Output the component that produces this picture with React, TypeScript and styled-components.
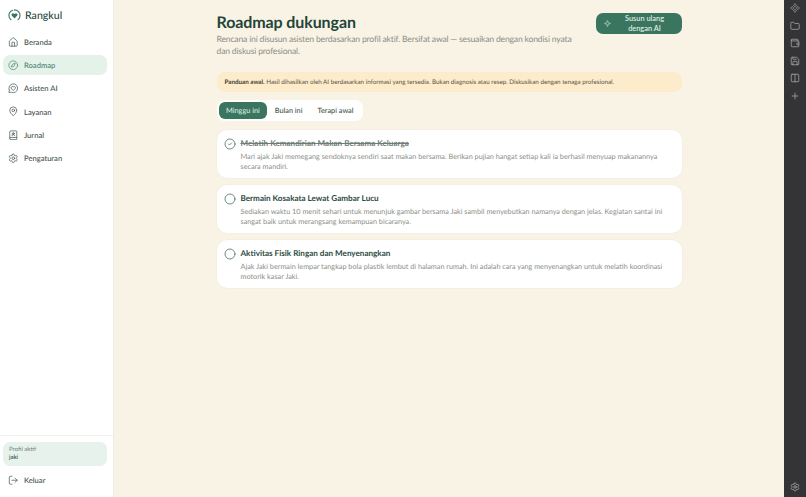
import React from 'react'
import styled, { createGlobalStyle } from 'styled-components'
import {
  Home,
  Compass,
  MessageCircleHeart,
  MapPin,
  BookUser,
  Settings,
  LogOut,
  Sparkle,
  CircleCheck,
  Circle,
  Plus,
  Folder,
  Wallet,
  Save,
  Columns2,
  Component,
} from 'lucide-react'

const GlobalStyle = createGlobalStyle`
  html, body { margin: 0; padding: 0; height: 100%; }
  body {
    font-family: Lato, Inter, "Liberation Sans", sans-serif;
    background: #f9f3e5;
    text-rendering: geometricPrecision;
  }
  * { box-sizing: border-box; }
`

const NAV = [
  { label: 'Beranda', icon: Home },
  { label: 'Roadmap', icon: Compass, active: true },
  { label: 'Asisten AI', icon: MessageCircleHeart },
  { label: 'Layanan', icon: MapPin },
  { label: 'Jurnal', icon: BookUser },
  { label: 'Pengaturan', icon: Settings },
]

const TASKS = [
  {
    title: 'Melatih Kemandirian Makan Bersama Keluarga',
    text: 'Mari ajak Jaki memegang sendoknya sendiri saat makan bersama. Berikan pujian hangat setiap kali ia berhasil menyuap makanannya secara mandiri.',
    done: true,
  },
  {
    title: 'Bermain Kosakata Lewat Gambar Lucu',
    text: 'Sediakan waktu 10 menit sehari untuk menunjuk gambar bersama Jaki sambil menyebutkan namanya dengan jelas. Kegiatan santai ini sangat baik untuk merangsang kemampuan bicaranya.',
  },
  {
    title: 'Aktivitas Fisik Ringan dan Menyenangkan',
    text: 'Ajak Jaki bermain lempar tangkap bola plastik lembut di halaman rumah. Ini adalah cara yang menyenangkan untuk melatih koordinasi motorik kasar Jaki.',
  },
]

const App = () => {
  return (
    <Page>
      <GlobalStyle />
      <Sidebar>
        <Brand>
          <svg width="13" height="13" viewBox="0 0 14 14" fill="none">
            <path d="M7 1a6 6 0 0 1 6 6 6 6 0 0 1-2.2 4.6M3.2 11.6A6 6 0 0 1 1 7a6 6 0 0 1 4-5.6" stroke="#3a7560" strokeWidth="1.2" strokeLinecap="round" />
            <path d="M7 10.2 4.2 7.4a1.7 1.7 0 0 1 2.4-2.4l.4.4.4-.4a1.7 1.7 0 0 1 2.4 2.4z" fill="#3a7560" />
          </svg>
          <BrandName>Rangkul</BrandName>
        </Brand>
        <Nav>
          {NAV.map(({ label, icon: Icon, active }) => (
            <NavItem key={label} $active={active}>
              <Icon size={10.5} strokeWidth={1.6} />
              {label}
            </NavItem>
          ))}
        </Nav>
        <SideBottom>
          <ProfileBox>
            <ProfileLabel>Profil aktif</ProfileLabel>
            <ProfileName>jaki</ProfileName>
          </ProfileBox>
          <NavItem>
            <LogOut size={10.5} strokeWidth={1.6} />
            Keluar
          </NavItem>
        </SideBottom>
      </Sidebar>

      <Main>
        <Content>
          <Head>
            <HeadText>
              <Title>Roadmap dukungan</Title>
              <Sub>
                Rencana ini disusun asisten berdasarkan profil aktif. Bersifat awal — sesuaikan dengan kondisi nyata dan diskusi profesional.
              </Sub>
            </HeadText>
            <RebuildButton>
              <Sparkle size={7} strokeWidth={1.8} />
              <span>Susun ulang dengan AI</span>
            </RebuildButton>
          </Head>

          <Notice>
            <b>Panduan awal.</b> Hasil dihasilkan oleh AI berdasarkan informasi yang tersedia. Bukan diagnosis atau resep. Diskusikan dengan tenaga profesional.
          </Notice>

          <Tabs>
            <Tab $active>Minggu ini</Tab>
            <Tab>Bulan ini</Tab>
            <Tab>Terapi awal</Tab>
          </Tabs>

          <TaskList>
            {TASKS.map((task) => (
              <TaskCard key={task.title}>
                <CheckWrap>
                  {task.done ? <CircleCheck size={12} strokeWidth={1.5} /> : <Circle size={12} strokeWidth={1.5} />}
                </CheckWrap>
                <div>
                  <TaskTitle $done={task.done}>{task.title}</TaskTitle>
                  <TaskText>{task.text}</TaskText>
                </div>
              </TaskCard>
            ))}
          </TaskList>
        </Content>
      </Main>

      <ToolRail>
        <Component size={10} strokeWidth={1.6} />
        <Folder size={10} strokeWidth={1.6} />
        <Wallet size={10} strokeWidth={1.6} />
        <Save size={10} strokeWidth={1.6} />
        <Columns2 size={10} strokeWidth={1.6} />
        <Plus size={10} strokeWidth={1.6} />
        <RailBottom>
          <Settings size={10} strokeWidth={1.6} />
        </RailBottom>
      </ToolRail>
    </Page>
  )
}

export default App

const Page = styled.div`
  display: flex;
  width: 100%;
  height: 100vh;
  overflow: hidden;
  background: #f9f3e5;
`

const Sidebar = styled.aside`
  width: 114px;
  flex-shrink: 0;
  display: flex;
  flex-direction: column;
  background: #ffffff;
  border-right: 1px solid #efece6;
`

const Brand = styled.div`
  height: 31px;
  display: flex;
  align-items: center;
  gap: 4px;
  padding: 0 0 0 8px;
`

const BrandName = styled.span`
  font-size: 10.6px;
  font-weight: 500;
  color: #2c4a3e;
`

const Nav = styled.nav`
  display: flex;
  flex-direction: column;
  gap: 3px;
  margin-top: 1px;
  padding: 0 6px 0 3px;
`

const NavItem = styled.div<{ $active?: boolean }>`
  height: 20.2px;
  display: flex;
  align-items: center;
  gap: 5.5px;
  padding-left: 5px;
  border-radius: 7px;
  font-size: 7.6px;
  font-weight: 500;
  color: ${(p) => (p.$active ? '#4a8570' : '#3f5149')};
  background: ${(p) => (p.$active ? '#e4f2ea' : 'transparent')};
`

const SideBottom = styled.div`
  margin-top: auto;
  padding: 6px 6px 7px 3px;
  border-top: 1px solid #f1f1ee;
  display: flex;
  flex-direction: column;
  gap: 4px;
`

const ProfileBox = styled.div`
  height: 24px;
  padding: 4px 6px;
  border-radius: 7px;
  background: #e7f2ec;
`

const ProfileLabel = styled.div`
  font-size: 6px;
  line-height: 8px;
  color: #6f7f78;
`

const ProfileName = styled.div`
  font-size: 6px;
  line-height: 8px;
  font-weight: 500;
  color: #2c4a3e;
`

const Main = styled.main`
  flex: 1;
  min-width: 0;
  display: flex;
  justify-content: center;
  padding-top: 13px;
`

const Content = styled.div`
  width: 465px;
  display: flex;
  flex-direction: column;
  align-items: flex-start;
`

const Head = styled.div`
  width: 100%;
  display: flex;
  justify-content: space-between;
  align-items: flex-start;
  gap: 18px;
`

const HeadText = styled.div`
  flex: 1;
  min-width: 0;
`

const Title = styled.h1`
  margin: 0 0 1px;
  font-size: 16px;
  line-height: 19px;
  font-weight: 700;
  letter-spacing: -0.1px;
  color: #23443a;
`

const Sub = styled.p`
  margin: 0;
  font-size: 8.6px;
  line-height: 12px;
  letter-spacing: -0.18px;
  color: #8b8f88;
`

const RebuildButton = styled.button`
  width: 86px;
  height: 21px;
  flex-shrink: 0;
  display: flex;
  align-items: center;
  gap: 5px;
  padding: 0 8px;
  border: 0;
  border-radius: 7px;
  background: #3a7560;
  color: #e8f2ec;
  font-family: inherit;
  font-size: 7.4px;
  line-height: 9.5px;
  font-weight: 500;
  text-align: center;
  span { flex: 1; }
`

const Notice = styled.div`
  width: 100%;
  height: 20px;
  margin-top: 15px;
  padding: 0 8px;
  display: flex;
  align-items: center;
  white-space: pre-wrap;
  border-radius: 8px;
  background: #fdeccb;
  font-size: 6.25px;
  color: #59513f;
  b { font-weight: 700; color: #3f3a2c; }
`

const Tabs = styled.div`
  display: flex;
  margin-top: 8px;
  padding: 2px;
  height: 21px;
  border-radius: 8px;
  background: #ffffff;
`

const Tab = styled.div<{ $active?: boolean }>`
  display: flex;
  align-items: center;
  padding: 0 7.5px;
  border-radius: 6px;
  font-size: 7.3px;
  font-weight: 500;
  color: ${(p) => (p.$active ? '#d8ebe1' : '#3f5149')};
  background: ${(p) => (p.$active ? '#3a7560' : 'transparent')};
`

const TaskList = styled.div`
  width: 100%;
  display: flex;
  flex-direction: column;
  gap: 7px;
  margin-top: 9px;
`

const TaskCard = styled.div`
  height: 48px;
  display: flex;
  gap: 6px;
  padding: 8px 14px 0 8px;
  border-radius: 10px;
  background: #ffffff;
  box-shadow: 0 0 0 0.5px #f0ebde;
`

const CheckWrap = styled.div`
  flex-shrink: 0;
  width: 10px;
  color: #3e6a5b;
  svg { display: block; margin-left: -1px; }
`

const TaskTitle = styled.div<{ $done?: boolean }>`
  font-size: 8.1px;
  line-height: 11px;
  font-weight: 700;
  color: ${(p) => (p.$done ? '#6f7d76' : '#2c4a3e')};
  text-decoration: ${(p) => (p.$done ? 'line-through' : 'none')};
`

const TaskText = styled.div`
  margin-top: 3px;
  font-size: 7.25px;
  line-height: 10px;
  color: #8b8f88;
`

const ToolRail = styled.div`
  width: 22px;
  flex-shrink: 0;
  display: flex;
  flex-direction: column;
  align-items: center;
  gap: 7.5px;
  padding-top: 3px;
  background: #343437;
  color: #b9b9bb;
`

const RailBottom = styled.div`
  margin-top: auto;
  padding-bottom: 5px;
  svg { display: block; }
`
